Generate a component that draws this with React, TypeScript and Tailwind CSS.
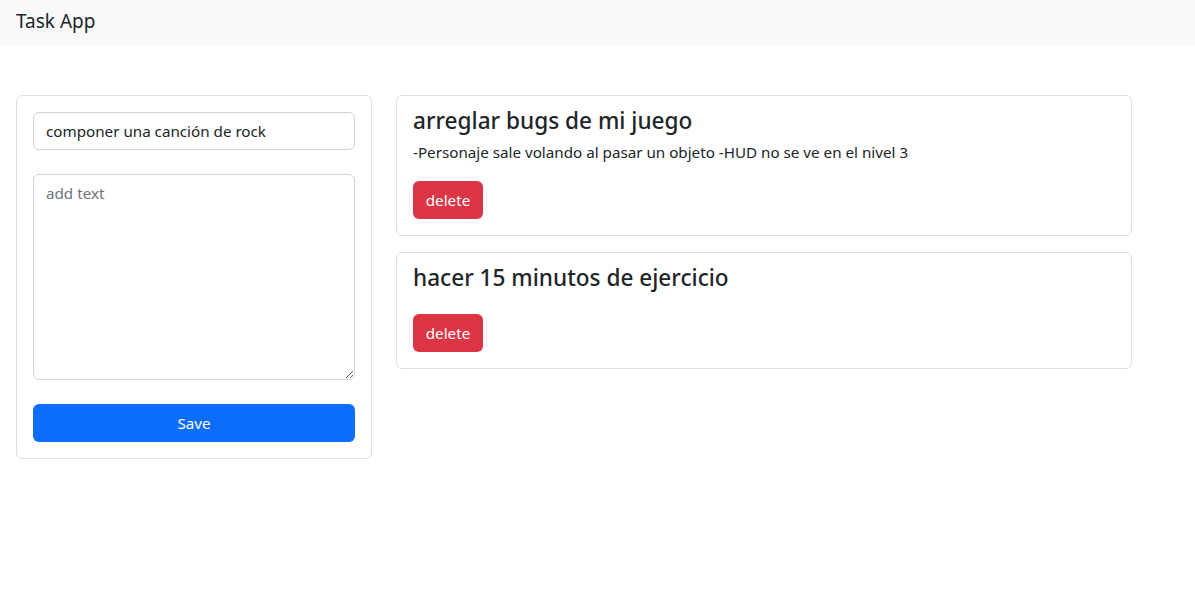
import React from "react";

const font = { fontFamily: '"Segoe UI", "Noto Sans", "Liberation Sans", sans-serif' };

function TaskCard({ title, desc }: { title: string; desc: string }) {
  return (
    <div className="rounded-[6px] border border-[#dfdfdf] bg-white p-4">
      <h4 className="m-0 -mt-[5px] text-[22.6px] font-[550] leading-[28.8px] text-[#212529]">{title}</h4>
      {desc ? (
        <p className="m-0 mb-[17px] mt-[4px] text-[15.2px] leading-[24px] text-[#212529]">{desc}</p>
      ) : (
        <div className="h-[21px]" />
      )}
      <button className="block h-[38px] w-[70px] rounded-[6px] bg-[#dc3545] text-[15.2px] leading-[24px] text-white">
        delete
      </button>
    </div>
  );
}

export default function App() {
  return (
    <div className="min-h-screen bg-white text-[#212529]" style={font}>
      <nav className="h-[46px] bg-[#f8f9fa] px-4 pt-[6px]">
        <span className="block text-[19px] leading-[30px] text-[#212529]">Task App</span>
      </nav>
      <div className="flex items-start gap-6 pl-4 pt-[49px]">
        <div className="flex w-[356px] flex-col gap-6 rounded-[6px] border border-[#dfdfdf] bg-white p-4">
          <input
            className="h-[38px] w-full rounded-[6px] border border-[#ced4da] px-3 text-[15.2px] text-[#212529] outline-none"
            defaultValue="componer una canción de rock"
          />
          <textarea
            className="block h-[206px] w-full rounded-[6px] border border-[#ced4da] px-3 py-[6px] text-[15.2px] leading-[24px] text-[#212529] outline-none placeholder:text-[#6c757d]"
            placeholder="add text"
          />
          <button className="h-[38px] w-full rounded-[6px] bg-[#0d6efd] text-[15.2px] text-white">Save</button>
        </div>
        <div className="flex w-[736px] flex-col gap-4">
          <TaskCard
            title="arreglar bugs de mi juego"
            desc="-Personaje sale volando al pasar un objeto -HUD no se ve en el nivel 3"
          />
          <TaskCard title="hacer 15 minutos de ejercicio" desc="" />
        </div>
      </div>
    </div>
  );
}
